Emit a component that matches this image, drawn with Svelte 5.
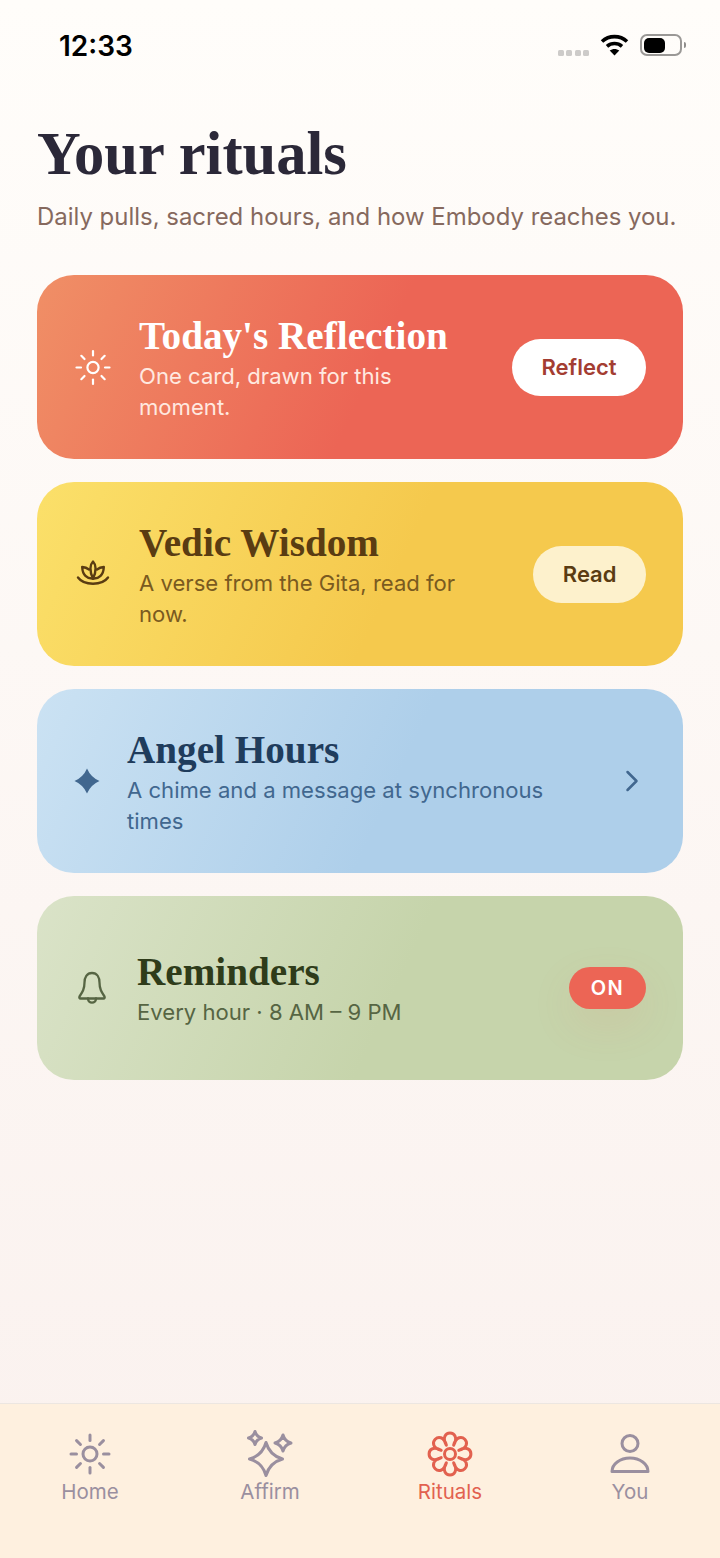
<script lang="ts">
  // eight narrow lobes around the centre, joined into one outline
  const pt = (r: number, deg: number) => {
    const a = ((deg - 90) * Math.PI) / 180;
    return `${(22 + r * Math.cos(a)).toFixed(2)} ${(22 + r * Math.sin(a)).toFixed(2)}`;
  };
  let flower = `M${pt(9.5, -22.5)}`;
  for (let i = 0; i < 8; i++) {
    const a = i * 45;
    flower += ` C${pt(28, a - 27)} ${pt(28, a + 27)} ${pt(9.5, a + 22.5)}`;
  }
  flower += 'Z';

  // four-point star with softly concave sides
  const star = (x: number, y: number, r: number, k = 0.22) => {
    const c = k * r;
    return `M${x} ${y - r}Q${x + c} ${y - c} ${x + r} ${y}Q${x + c} ${y + c} ${x} ${y + r}Q${x - c} ${y + c} ${x - r} ${y}Q${x - c} ${y - c} ${x} ${y - r}Z`;
  };

  const rays = [0, 45, 90, 135, 180, 225, 270, 315];
</script>

<div class="page">
  <div class="status">
    <span class="status__time">12:33</span>
    <div class="status__icons">
      <div class="signal"><i></i><i></i><i></i><i></i></div>
      <svg class="wifi" width="29" height="22" viewBox="0 0 28 22">
        <path d="M1.5 7.5C8.5 1 19.500 1 26.500 7.500" fill="none" stroke="#000" stroke-width="3.600" />
        <path d="M6.500 12.300C10.800 8.500 17.200 8.500 21.500 12.300" fill="none" stroke="#000" stroke-width="3.600" />
        <path d="M14 21.500L9.200 16.500C12 14.400 16 14.400 18.800 16.500Z" fill="#000" />
      </svg>
      <div class="battery">
        <div class="battery__body"><div class="battery__level"></div></div>
        <div class="battery__cap"></div>
      </div>
    </div>
  </div>

  <main class="content">
    <h1>Your rituals</h1>
    <p class="lead">Daily pulls, sacred hours, and how Embody reaches you.</p>

    <div class="cards">
      <section class="card card--coral">
        <svg class="icon" width="38" height="37" viewBox="0 0 38 37" fill="none" stroke="currentColor" stroke-width="2.200" stroke-linecap="round">
          <circle cx="19" cy="18.500" r="5.600" />
          {#each rays as r}
            <line x1="19" y1="6.500" x2="19" y2="2" transform="rotate({r} 19 18.500)" />
          {/each}
        </svg>
        <div class="card__text">
          <h2>Today's Reflection</h2>
          <p>One card, drawn for this moment.</p>
        </div>
        <button class="pill pill--white">Reflect</button>
      </section>

      <section class="card card--yellow">
        <svg class="icon" width="38" height="37" viewBox="0 0 38 37" fill="none" stroke="currentColor" stroke-width="2.400" stroke-linecap="round" stroke-linejoin="round">
          <path d="M4 21.500C10 29.800 28 29.800 34 21.500" />
          <path d="M19 5.500C16 8.500 15.200 15 19 22.500C22.800 15 22 8.500 19 5.500Z" />
          <path d="M19 22.500C13 23 8.500 19 8.200 11C10.800 11.200 13 12 15 13.500" />
          <path d="M19 22.500C25 23 29.500 19 29.800 11C27.200 11.200 25 12 23 13.500" />
        </svg>
        <div class="card__text">
          <h2>Vedic Wisdom</h2>
          <p>A verse from the Gita, read for now.</p>
        </div>
        <button class="pill pill--cream">Read</button>
      </section>

      <section class="card card--blue">
        <svg class="icon" width="26" height="26" viewBox="0 0 26 26">
          <path d={star(13, 13, 12.500, 0.3)} fill="currentColor" />
        </svg>
        <div class="card__text">
          <h2>Angel Hours</h2>
          <p>A chime and a message at synchronous times</p>
        </div>
        <svg class="chevron" width="14" height="22" viewBox="0 0 14 22" fill="none" stroke="currentColor" stroke-width="2.500" stroke-linecap="round" stroke-linejoin="round">
          <path d="M2.500 2L11.500 11L2.500 20" />
        </svg>
      </section>

      <section class="card card--green">
        <svg class="icon" width="36" height="36" viewBox="0 0 36 36" fill="none" stroke="currentColor" stroke-width="2.300" stroke-linecap="round" stroke-linejoin="round">
          <path d="M18 3C12.800 3 10.500 7.500 10.500 12.500C10.500 19 8.500 22 5.500 26.500C5 27.500 5.500 28.500 6.500 28.500H29.500C30.500 28.500 31 27.500 30.500 26.500C27.500 22 25.500 19 25.500 12.500C25.500 7.500 23.200 3 18 3Z" />
          <path d="M14 28.500C14 34 22 34 22 28.500" />
        </svg>
        <div class="card__text">
          <h2>Reminders</h2>
          <p>Every hour · 8 AM – 9 PM</p>
        </div>
        <span class="badge">ON</span>
      </section>
    </div>
  </main>

  <nav class="tabs">
    <div class="tab">
      <svg width="44" height="44" viewBox="0 0 44 44" fill="none" stroke="currentColor" stroke-width="3" stroke-linecap="round">
        <circle cx="22" cy="22" r="7" />
        {#each rays as r}
          <line x1="22" y1="8.500" x2="22" y2="3" transform="rotate({r} 22 22)" />
        {/each}
      </svg>
      <span>Home</span>
    </div>
    <div class="tab">
      <svg width="52" height="44" viewBox="0 0 52 44" fill="none" stroke="currentColor" stroke-width="3" stroke-linejoin="round">
        <path d={star(22, 27, 16.500)} />
        <path d={star(11, 6, 6.500)} />
        <path d={star(39, 11, 8)} />
      </svg>
      <span>Affirm</span>
    </div>
    <div class="tab tab--active">
      <svg width="44" height="44" viewBox="0 0 44 44" fill="none" stroke="currentColor" stroke-width="3" stroke-linejoin="round">
        <path d={flower} />
        <circle cx="22" cy="22" r="5.500" />
      </svg>
      <span>Rituals</span>
    </div>
    <div class="tab">
      <svg width="44" height="44" viewBox="0 0 44 44" fill="none" stroke="currentColor" stroke-width="3" stroke-linejoin="round">
        <circle cx="22" cy="11.500" r="8" />
        <path d="M4 39.500C4 32 12 26 22 26C32 26 40 32 40 39.500Z" />
      </svg>
      <span>You</span>
    </div>
  </nav>
</div>

<style>
  :global(body) {
    margin: 0;
    font-family: Inter, "Noto Sans", sans-serif;
  }

  .page {
    width: 720px;
    height: 1558px;
    display: flex;
    flex-direction: column;
    background: linear-gradient(180deg, #fffdfa 0%, #faf1ee 100%);
  }

  /* ── Status bar ───────────────────────────────────────── */
  .status {
    height: 121px;
    box-sizing: border-box;
    padding: 28px 34px 0 59px;
    display: flex;
    justify-content: space-between;
    align-items: flex-start;
  }
  .status__time {
    font-size: 28px;
    line-height: 36px;
    font-weight: 600;
    color: #000;
  }
  .status__icons {
    display: flex;
    align-items: center;
    height: 34px;
  }
  .signal {
    display: flex;
    gap: 2.300px;
    margin: 16px 11px 0 0;
  }
  .signal i {
    width: 6px;
    height: 6px;
    border-radius: 1.500px;
    background: #cdcbc9;
  }
  .wifi { margin-right: 11px; }
  .battery {
    display: flex;
    align-items: center;
    gap: 1.500px;
  }
  .battery__body {
    width: 42px;
    height: 22px;
    box-sizing: border-box;
    padding: 1.500px;
    border: 2px solid #9a9896;
    border-radius: 7px;
  }
  .battery__level {
    width: 21px;
    height: 100%;
    background: #000;
    border-radius: 5px;
  }
  .battery__cap {
    width: 2.500px;
    height: 6px;
    background: #8f8d8b;
    border-radius: 0 2px 2px 0;
  }

  /* ── Content ──────────────────────────────────────────── */
  .content {
    flex: 1;
    padding: 0 37px;
  }
  h1 {
    margin: 0;
    font: 700 60.500px/66px "Liberation Serif", serif;
    color: #2b2838;
  }
  .lead {
    margin: 13px 0 0;
    font-size: 23.950px;
    line-height: 34px;
    color: #86695e;
  }

  .cards {
    margin-top: 41px;
    display: flex;
    flex-direction: column;
    gap: 23px;
  }

  .card {
    height: 184px;
    box-sizing: border-box;
    padding: 0 37px;
    border-radius: 37px;
    display: flex;
    align-items: center;
    gap: 27px;
  }
  .card--coral {
    background: linear-gradient(115deg, #f08f66 0%, #ec6555 52%, #ec6555 100%);
    color: #fff;
  }
  .card--coral p { color: #ffe9e0; }
  .card--yellow {
    background: linear-gradient(115deg, #fbe06a 0%, #f5c94d 55%, #f5c94d 100%);
    color: #5a3c12;
  }
  .card--yellow p { color: #7a5a20; }
  .card--blue {
    background: linear-gradient(115deg, #cbe2f3 0%, #aecfea 55%, #aecfea 100%);
    color: #1f3c5c;
  }
  .card--blue p { color: #41678f; }
  .card--blue .icon { color: #41678f; }
  .card--green {
    background: linear-gradient(115deg, #dae3c8 0%, #c6d4ab 55%, #c6d4ab 100%);
    color: #2f3c1a;
  }
  .card--green p { color: #566543; }
  .card--green .icon { color: #566543; }

  .icon { flex-shrink: 0; }
  .card__text {
    flex: 1;
    min-width: 0;
    padding-top: 2px;
  }
  h2 {
    margin: 0;
    font: 700 39.200px/44px "Liberation Serif", serif;
  }
  .card__text p {
    margin: 3px 0 0;
    font-size: 22.100px;
    line-height: 31px;
  }

  .pill {
    flex-shrink: 0;
    height: 57px;
    padding: 0 29.500px;
    border: none;
    border-radius: 29px;
    font: 600 22px Inter, sans-serif;
  }
  .pill--white {
    background: #fff;
    color: #a33d32;
  }
  .pill--cream {
    background: #fdf1cc;
    color: #5a3c12;
  }
  .chevron {
    flex-shrink: 0;
    margin-right: 7px;
    color: #41678f;
  }
  .badge {
    flex-shrink: 0;
    width: 77px;
    height: 42px;
    border-radius: 21px;
    background: #ec6555;
    color: #fff;
    font-size: 20px;
    font-weight: 600;
    letter-spacing: 1.500px;
    display: flex;
    align-items: center;
    justify-content: center;
    box-shadow: 0 16px 44px rgba(238, 101, 85, 0.1);
  }

  /* ── Tab bar ──────────────────────────────────────────── */
  .tabs {
    height: 155px;
    box-sizing: border-box;
    border-top: 1px solid #ece6e1;
    background: #fef0df;
    display: grid;
    grid-template-columns: repeat(4, 1fr);
    padding-top: 28px;
  }
  .tab {
    display: flex;
    flex-direction: column;
    align-items: center;
    color: #9a8f9f;
    font-size: 20.500px;
    line-height: 26px;
    font-weight: 400;
  }
  .tab svg {
    display: block;
    overflow: visible;
  }
  .tab span { margin-top: 3px; }
  .tab--active { color: #e2614f; }
</style>
